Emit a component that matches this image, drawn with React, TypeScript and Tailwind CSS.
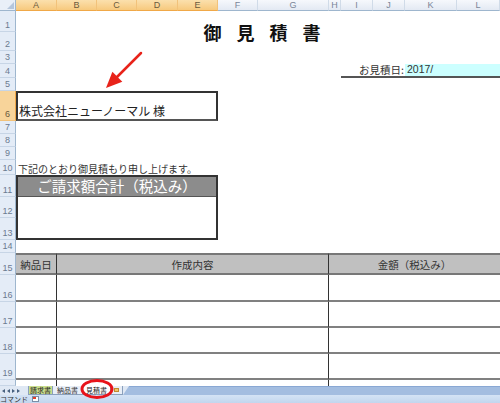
import React from 'react';

const JP = "font-['Noto_Sans_CJK_JP','Noto_Sans',sans-serif]";

const colHeads = [
  { l: 'A', w: 'w-[41px]', sel: true },
  { l: 'B', w: 'w-[40px]', sel: true },
  { l: 'C', w: 'w-[40px]', sel: true },
  { l: 'D', w: 'w-[41px]', sel: true },
  { l: 'E', w: 'w-[40px]', sel: true },
  { l: 'F', w: 'w-[40px]', sel: false },
  { l: 'G', w: 'w-[71px]', sel: false },
  { l: 'H', w: 'w-[12px]', sel: false },
  { l: 'I', w: 'w-[32px]', sel: false },
  { l: 'J', w: 'w-[32px]', sel: false },
  { l: 'K', w: 'w-[52px]', sel: false },
  { l: 'L', w: 'flex-1', sel: false },
];

const rowHeads = [
  { l: '1', h: 'h-[21px]' },
  { l: '2', h: 'h-[19px]' },
  { l: '3', h: 'h-[13px]' },
  { l: '4', h: 'h-[14px]' },
  { l: '5', h: 'h-[13px]' },
  { l: '6', h: 'h-[30px]', sel: true },
  { l: '7', h: 'h-[13px]' },
  { l: '8', h: 'h-[13px]' },
  { l: '9', h: 'h-[13px]' },
  { l: '10', h: 'h-[15px]' },
  { l: '11', h: 'h-[22px]' },
  { l: '12', h: 'h-[21px]' },
  { l: '13', h: 'h-[22px]' },
  { l: '14', h: 'h-[13px]' },
  { l: '15', h: 'h-[22px]' },
  { l: '16', h: 'h-[27px]' },
  { l: '17', h: 'h-[26px]' },
  { l: '18', h: 'h-[26px]' },
  { l: '19', h: 'h-[26px]' },
  { l: '', h: 'h-[6px]' },
];

const tableRows = [
  { r: 'row-start-16' },
  { r: 'row-start-17' },
  { r: 'row-start-18' },
  { r: 'row-start-19' },
];

export default function App() {
  return (
    <div className="relative w-[500px] h-[403px] overflow-hidden bg-white flex flex-col">
      {/* column header */}
      <div className="flex h-[11px] shrink-0 font-['Liberation_Sans',sans-serif]">
        <div className="relative w-[16px] bg-[#e9eff8] border-r border-b border-[#9eb6ce]">
          <div className="absolute right-[1px] bottom-[1px] w-0 h-0 border-l-[7px] border-l-transparent border-b-[7px] border-b-[#b5c6dc]" />
        </div>
        {colHeads.map((c) => (
          <div
            key={c.l}
            className={
              c.w +
              ' flex items-center justify-center text-[9px] leading-none border-r border-b ' +
              (c.sel
                ? 'bg-linear-to-b from-[#fbe0ad] to-[#f7c97d] border-r-[#f2c27a] border-b-[#f0a848] text-[#6a5a3c]'
                : 'bg-linear-to-b from-[#f6f8fc] to-[#e3e9f3] border-r-[#d0dbe8] border-b-[#9eb6ce] text-[#7a8698]')
            }
          >
            {c.l}
          </div>
        ))}
      </div>

      {/* sheet body */}
      <div className="flex h-[375px] shrink-0">
        <div className="w-[16px] flex flex-col font-['Liberation_Sans',sans-serif]">
          {rowHeads.map((r, i) => (
            <div
              key={i}
              className={
                r.h +
                ' flex items-end justify-center text-[9px] leading-[11px] border-r border-b overflow-hidden ' +
                (r.sel
                  ? 'bg-[#f8d49a] border-r-[#f0a848] border-b-[#f2c27a] text-[#6a5a3c]'
                  : 'bg-[#e4ecf7] border-r-[#9eb6ce] border-b-[#c7d5e6] text-[#6b7a90]')
              }
            >
              {r.l}
            </div>
          ))}
        </div>

        <div
          className={
            'flex-1 grid grid-cols-[41px_40px_40px_41px_40px_40px_71px_12px_32px_32px_52px_1fr] grid-rows-[21px_19px_13px_14px_13px_30px_13px_13px_13px_15px_22px_21px_22px_13px_22px_27px_26px_26px_26px_6px] text-[#222] ' +
            JP
          }
        >
          {/* title */}
          <div className="col-start-1 col-end-13 row-start-1 row-end-3 flex items-center justify-center pt-[2px] pl-[8px] gap-[15px] text-[18px] font-bold leading-none text-[#111]">
            <span>御</span>
            <span>見</span>
            <span>積</span>
            <span>書</span>
          </div>

          {/* date */}
          <div className="col-start-9 col-end-11 row-start-4 row-end-5 border-b-2 border-[#555] flex items-end justify-end pr-[1px] text-[10.5px] leading-[13px] text-[#333] whitespace-nowrap">
            お見積日:
          </div>
          <div className="col-start-11 col-end-13 row-start-4 row-end-5 bg-[#ccffff] border-b-2 border-[#555] flex items-end pl-[2px] text-[10.5px] leading-[13px] text-[#333] font-['Liberation_Sans',sans-serif]">
            2017/
          </div>

          {/* name box */}
          <div className="col-start-1 col-end-6 row-start-6 row-end-7 border-2 border-[#333] border-b-[#555] flex items-end pl-[1px] pb-[1px] text-[12px] leading-[15px] whitespace-nowrap">
            株式会社ニューノーマル 様
          </div>

          {/* sentence */}
          <div className="col-start-1 col-end-13 row-start-10 row-end-11 flex items-end pl-[2px] text-[10px] leading-[13px] text-[#333] whitespace-nowrap">
            下記のとおり御見積もり申し上げます。
          </div>

          {/* total box */}
          <div className="col-start-1 col-end-6 row-start-11 row-end-14 border-2 border-[#333] flex flex-col">
            <div className="h-[20px] bg-[#8c8c8c] border-b border-[#555] flex items-center justify-center text-white text-[14.5px] leading-none">
              ご請求額合計（税込み）
            </div>
            <div className="flex-1" />
          </div>

          {/* table header */}
          <div className="col-start-1 col-end-2 row-start-15 row-end-16 bg-[#c0c0c0] border-t-2 border-b-2 border-t-[#777] border-b-[#777] border-r border-r-[#333] flex items-end justify-center pb-[2px] text-[10.5px] leading-[13px] text-[#333]">
            納品日
          </div>
          <div className="col-start-2 col-end-8 row-start-15 row-end-16 bg-[#c0c0c0] border-t-2 border-b-2 border-t-[#777] border-b-[#777] border-r border-r-[#333] flex items-end justify-center pb-[2px] text-[10.5px] leading-[13px] text-[#333]">
            作成内容
          </div>
          <div className="col-start-8 col-end-13 row-start-15 row-end-16 bg-[#c0c0c0] border-t-2 border-b-2 border-t-[#777] border-b-[#777] flex items-end justify-center pb-[2px] text-[10.5px] leading-[13px] text-[#333]">
            金額（税込み）
          </div>

          {tableRows.map((t, i) => (
            <React.Fragment key={i}>
              <div className={t.r + ' col-start-1 col-end-2 border-b-2 border-b-[#808080] border-r border-r-[#333]'} />
              <div className={t.r + ' col-start-2 col-end-8 border-b-2 border-b-[#808080] border-r border-r-[#333]'} />
              <div className={t.r + ' col-start-8 col-end-13 border-b-2 border-b-[#808080]'} />
            </React.Fragment>
          ))}
          <div className="row-start-20 col-start-1 col-end-2 border-r border-r-[#333]" />
          <div className="row-start-20 col-start-2 col-end-8 border-r border-r-[#333]" />
        </div>
      </div>

      {/* sheet tabs */}
      <div className={'flex h-[9px] shrink-0 items-stretch bg-[#dfe8f4] text-[7px] leading-none ' + JP}>
        <div className="w-[28px] flex items-center gap-[2px] pl-[2px] text-[#46607f]">
          <span className="w-0 h-0 border-y-[2px] border-y-transparent border-r-[3px] border-r-[#46607f]" />
          <span className="w-0 h-0 border-y-[2px] border-y-transparent border-r-[3px] border-r-[#46607f]" />
          <span className="w-0 h-0 border-y-[2px] border-y-transparent border-l-[3px] border-l-[#46607f]" />
          <span className="w-0 h-0 border-y-[2px] border-y-transparent border-l-[3px] border-l-[#46607f]" />
        </div>
        <div className="w-[25px] bg-[#c9dd8c] border-x border-b border-[#8aa0bc] flex items-center justify-center text-[#222]">請求書</div>
        <div className="w-[30px] bg-[#e8eef7] border-r border-b border-[#8aa0bc] flex items-center justify-center text-[#333]">納品書</div>
        <div className="w-[28px] bg-white border-r border-b border-[#8aa0bc] flex items-center justify-center text-[#222]">見積書</div>
        <div className="w-[12px] bg-[#e8eef7] border-r border-b border-[#8aa0bc] flex items-center justify-center">
          <span className="w-[5px] h-[4px] bg-[#f3c46a] border border-[#c08a30]" />
        </div>
        <div className="w-0 h-0 border-b-[9px] border-b-[#a3bde0] border-l-[6px] border-l-transparent" />
        <div className="flex-1 bg-[#a3bde0] border-t border-[#89a8d4]" />
      </div>

      {/* status bar */}
      <div className={'flex h-[8px] shrink-0 items-center bg-linear-to-b from-[#d4e3f5] to-[#c2d6ee] text-[7px] leading-none text-[#333] ' + JP}>
        <span className="pl-[0px]">コマンド</span>
        <span className="ml-[4px] w-[7px] h-[6px] bg-white border border-[#7a8fa8] relative">
          <span className="absolute left-0 top-0 w-[3px] h-[2px] bg-[#e0402a]" />
        </span>
      </div>

      {/* annotations */}
      <svg className="absolute left-0 top-0 pointer-events-none" width="500" height="403" viewBox="0 0 500 403">
        <line x1="141" y1="53" x2="115" y2="79" stroke="#e8231a" strokeWidth="2.5" strokeLinecap="round" />
        <polygon points="106,88 112.4,71.8 122.3,81.7" fill="#e8231a" />
        <ellipse cx="97" cy="389" rx="15" ry="8.5" fill="none" stroke="#e8141a" strokeWidth="3" />
      </svg>
    </div>
  );
}
